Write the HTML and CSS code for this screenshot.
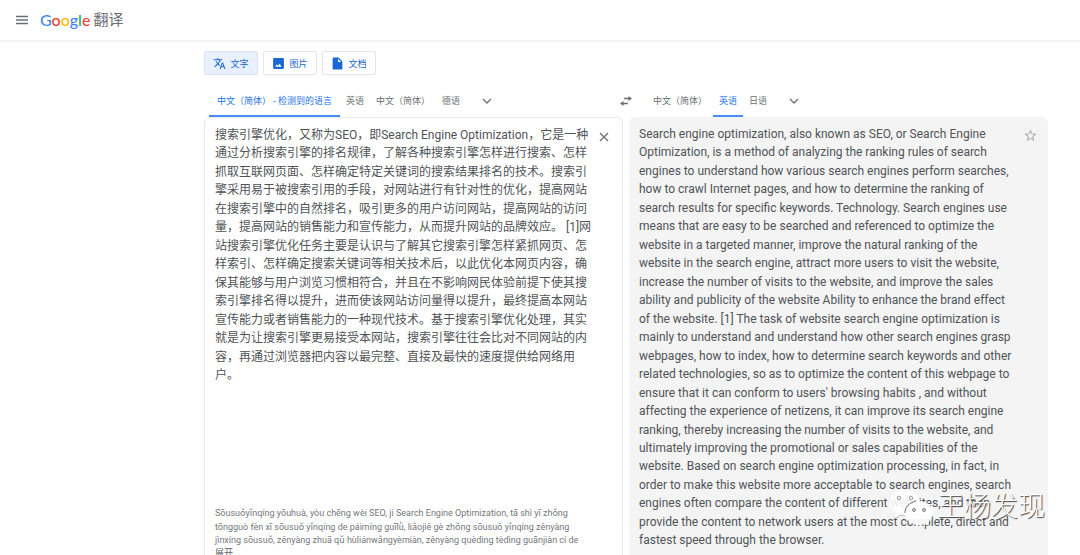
FILE: index.html
```html
<!DOCTYPE html>
<html lang="zh-CN">
<head>
<meta charset="utf-8">
<title>Google 翻译</title>
<link rel="stylesheet" href="styles.css">
</head>
<body>
<header class="topbar">
  <button class="icon-btn" aria-label="主菜单">
    <svg width="12" height="10" viewBox="0 0 12 10"><path d="M0 1.500h12M0 5h12M0 8.500h12" stroke="currentColor" stroke-width="1.300"/></svg>
  </button>
  <a class="brand" href="#"><span class="logo"><span class="blue">G</span><span class="red">o</span><span class="yellow">o</span><span class="blue">g</span><span class="green">l</span><span class="red">e</span></span><span class="product">翻译</span></a>
</header>
<main class="page">
  <nav class="modes">
    <button class="mode active">
      <svg width="13" height="13" viewBox="0 0 24 24"><path fill="currentColor" d="M12.87 15.07l-2.54-2.51.03-.03A17.52 17.52 0 0 0 14.07 6H17V4h-7V2H8v2H1v1.99h11.17C11.5 7.92 10.44 9.75 9 11.35 8.07 10.32 7.3 9.19 6.69 8h-2c.73 1.63 1.73 3.17 2.98 4.56l-5.09 5.02L4 19l5-5 3.11 3.11.76-2.04zM18.500 10h-2L12 22h2l1.120-3h4.750L21 22h2l-4.500-12zm-2.620 7l1.620-4.330L19.120 17h-3.240z"/></svg>
      文字
    </button>
    <button class="mode">
      <svg width="13" height="13" viewBox="0 0 24 24"><path fill="currentColor" d="M22 20V4a2 2 0 0 0-2-2H4a2 2 0 0 0-2 2v16c0 1.100.9 2 2 2h16a2 2 0 0 0 2-2zM9 13.500l2 2.500 3-3.500 4 5.500H6l3-4.500z"/></svg>
      图片
    </button>
    <button class="mode">
      <svg width="13" height="13" viewBox="0 0 24 24"><path fill="currentColor" d="M5 1a2 2 0 0 0-2 2v18c0 1.100.9 2 2 2h14a2 2 0 0 0 2-2V8l-7-7H5zm8 8V3l6 6h-6z"/></svg>
      文档
    </button>
  </nav>
  <div class="languages">
    <div class="tabs">
      <button class="tab detected active">中文（简体） - 检测到的语言</button>
      <button class="tab">英语</button>
      <button class="tab">中文（简体）</button>
      <button class="tab">德语</button>
      <button class="more" aria-label="更多源语言"><svg width="10" height="6" viewBox="0 0 10 6"><path d="M1 1l4 4 4-4" fill="none" stroke="currentColor" stroke-width="1.300"/></svg></button>
    </div>
    <button class="swap" aria-label="切换语言"><svg width="12" height="10" viewBox="0 0 12 10"><path d="M4 2.500h5M3 7.500h5" stroke="currentColor" stroke-width="1.400"/><path d="M8.500 0L12 2.500 8.500 5zM3.500 5L0 7.500 3.500 10z" fill="currentColor"/></svg></button>
    <div class="tabs target">
      <button class="tab">中文（简体）</button>
      <button class="tab active">英语</button>
      <button class="tab">日语</button>
      <button class="more" aria-label="更多目标语言"><svg width="10" height="6" viewBox="0 0 10 6"><path d="M1 1l4 4 4-4" fill="none" stroke="currentColor" stroke-width="1.300"/></svg></button>
    </div>
  </div>
  <div class="panels">
    <section class="panel source">
      <div class="entry">
        <textarea class="body-text" rows="20" aria-label="原文" spellcheck="false">搜索引擎优化，又称为SEO，即Search Engine Optimization，它是一种通过分析搜索引擎的排名规律，了解各种搜索引擎怎样进行搜索、怎样抓取互联网页面、怎样确定特定关键词的搜索结果排名的技术。搜索引擎采用易于被搜索引用的手段，对网站进行有针对性的优化，提高网站在搜索引擎中的自然排名，吸引更多的用户访问网站，提高网站的访问量，提高网站的销售能力和宣传能力，从而提升网站的品牌效应。 [1]网站搜索引擎优化任务主要是认识与了解其它搜索引擎怎样紧抓网页、怎样索引、怎样确定搜索关键词等相关技术后，以此优化本网页内容，确保其能够与用户浏览习惯相符合，并且在不影响网民体验前提下使其搜索引擎排名得以提升，进而使该网站访问量得以提升，最终提高本网站宣传能力或者销售能力的一种现代技术。基于搜索引擎优化处理，其实就是为让搜索引擎更易接受本网站，搜索引擎往往会比对不同网站的内容，再通过浏览器把内容以最完整、直接及最快的速度提供给网络用户。</textarea>
        <button class="clear" aria-label="清除原文"><svg width="10" height="10" viewBox="0 0 10 10"><path d="M1 1l8 8M9 1L1 9" stroke="currentColor" stroke-width="1.300"/></svg></button>
      </div>
      <div class="pinyin">Sōusuǒyǐnqíng yōuhuà, yòu chēng wèi SEO, jí Search Engine Optimization, tā shì yī zhǒng tōngguò fèn xī sōusuǒ yǐnqíng de páimíng guīlǜ, liǎojiě gè zhǒng sōusuǒ yǐnqíng zěnyàng jìnxíng sōusuǒ, zěnyàng zhuā qǔ hùliánwǎngyèmiàn, zěnyàng quèdìng tèdìng guānjiàn cí de</div>
      <button class="expand">展开</button>
    </section>
    <section class="panel result">
      <p class="body-text" lang="en">Search engine optimization, also known as SEO, or Search Engine Optimization, is a method of analyzing the ranking rules of search engines to understand how various search engines perform searches, how to crawl Internet pages, and how to determine the ranking of search results for specific keywords. Technology. Search engines use means that are easy to be searched and referenced to optimize the website in a targeted manner, improve the natural ranking of the website in the search engine, attract more users to visit the website, increase the number of visits to the website, and improve the sales ability and publicity of the website Ability to enhance the brand effect of the website. [1] The task of website search engine optimization is mainly to understand and understand how other search engines grasp webpages, how to index, how to determine search keywords and other related technologies, so as to optimize the content of this webpage to ensure that it can conform to users' browsing habits , and without affecting the experience of netizens, it can improve its search engine ranking, thereby increasing the number of visits to the website, and ultimately improving the promotional or sales capabilities of the website. Based on search engine optimization processing, in fact, in order to make this website more acceptable to search engines, search engines often compare the content of different websites, and then provide the content to network users at the most complete, direct and fastest speed through the browser.</p>
      <button class="star" aria-label="保存翻译"><svg width="15" height="15" viewBox="0 0 24 24"><path fill="currentColor" d="M22 9.240l-7.190-.62L12 2 9.190 8.630 2 9.240l5.460 4.730L5.820 21 12 17.270 18.180 21l-1.630-7.030L22 9.240zM12 15.400l-3.760 2.270 1-4.280-3.320-2.880 4.380-.38L12 6.100l1.710 4.040 4.380.38-3.320 2.880 1 4.280L12 15.400z"/></svg></button>
    </section>
  </div>
</main>
<div class="watermark">
  <svg width="46" height="38" viewBox="0 0 46 38">
    <path d="M17 2C8 2 2 8 2 15c0 4 2 7 6 10l-2 6 7-4c2 1 3 1 5 1 8 0 14-6 14-13S25 2 17 2z" fill="#fff" fill-opacity=".88"/>
    <path d="M6 31l7-4c1 .5 3 1 4 1" fill="none" stroke="#aaa" stroke-width=".8"/>
    <path d="M31 13c-8 0-14 5-14 12 0 6 6 12 14 12 2 0 3 0 5-1l5 2-1-4c3-2 5-5 5-9 0-7-6-12-14-12z" fill="#fff" fill-opacity=".9"/>
    <path d="M17 25c0-6 4-10 11-12" fill="none" stroke="#666" stroke-width="1"/>
    <g fill="#eee" stroke="#888" stroke-width=".8"><circle cx="11" cy="10" r="1.800"/><circle cx="23" cy="10" r="1.800"/></g>
    <g fill="#ddd" stroke="#666" stroke-width=".8"><circle cx="26" cy="22" r="1.500"/><circle cx="36" cy="22" r="1.500"/></g>
  </svg>
  <span>王杨发现</span>
</div>
</body>
</html>
```

FILE: styles.css
```css
* { box-sizing: border-box; }
html, body { height: 100%; margin: 0; }
body {
  display: flex;
  flex-direction: column;
  overflow: hidden;
  background: #fff;
  color: #6b6e72;
  font-family: Roboto, "Noto Sans CJK SC", sans-serif;
  font-size: 9px;
}
button {
  display: flex;
  align-items: center;
  justify-content: center;
  padding: 0;
  border: 0;
  background: none;
  color: inherit;
  font: inherit;
}
svg { display: block; flex: none; }
.topbar {
  display: flex;
  align-items: center;
  gap: 12px;
  flex: none;
  height: 42px;
  padding: 0 16px;
  border-bottom: 2px solid #f3f3f4;
}
.brand {
  display: flex;
  align-items: center;
  gap: 3px;
  color: #6b6e72;
  line-height: 18px;
  text-decoration: none;
}
.logo {
  font-family: Lato, sans-serif;
  font-size: 16px;
  font-weight: 500;
}
.product { font-size: 15px; }
.blue { color: #4285f4; }
.red { color: #ea4335; }
.yellow { color: #fbbc05; }
.green { color: #34a853; }
.page {
  display: flex;
  flex-direction: column;
  flex: 1;
  min-height: 0;
  padding: 9px 32px 0 204px;
}
.modes { display: flex; gap: 5px; }
.mode {
  gap: 4px;
  width: 54px;
  height: 24px;
  border: 1px solid #e4e6e9;
  border-radius: 2px;
  color: #1967d2;
}
.mode.active { background: #e8f0fe; border-color: #d8e3f6; }
.languages {
  display: grid;
  grid-template-columns: 1fr 20px 1fr;
  height: 33px;
  margin-top: 9px;
}
.tabs { display: flex; padding-left: 5px; }
.tabs.target { padding-left: 11px; }
.tab {
  padding: 2px 6px 0;
  border-bottom: 2px solid transparent;
  white-space: nowrap;
}
.tab.active { color: #1a73e8; border-color: #4a8df0; }
.tab.detected { min-width: 131px; }
.more { width: 20px; margin-left: 11px; }
.panels {
  display: grid;
  grid-template-columns: 1fr 1fr;
  gap: 6px;
  flex: 1;
  min-height: 0;
}
.panel { border-radius: 6px 6px 0 0; overflow: hidden; }
.source { border: 1px solid #e8eaed; border-bottom: 0; padding: 8px 9px 0 10px; }
.entry { display: flex; justify-content: space-between; }
.body-text {
  margin: 0;
  color: #505357;
  font-family: Roboto, "Noto Sans CJK SC", sans-serif;
  font-size: 12px;
  line-height: 1.54;
}
textarea.body-text {
  display: block;
  width: 380px;
  padding: 0;
  border: 0;
  outline: 0;
  resize: none;
  overflow: hidden;
  background: none;
}
.clear { width: 18px; height: 22px; }
.pinyin {
  width: 376px;
  margin-top: 12px;
  color: #74777b;
  line-height: 1.48;
}
.expand { color: #5f6368; line-height: 1.48; }
.result {
  display: flex;
  align-items: flex-start;
  justify-content: space-between;
  padding: 8px 10px 0;
  background: #f4f4f4;
}
.result .body-text { width: 378px; }
.star { width: 16px; height: 20px; color: #aaacaf; }
.watermark {
  position: absolute;
  right: 35px;
  bottom: 29px;
  display: flex;
  align-items: center;
  gap: 3px;
  color: #fff;
  font-size: 27px;
  font-weight: 300;
  line-height: 38px;
  text-shadow: 1px 1px 1px #444;
}
```
